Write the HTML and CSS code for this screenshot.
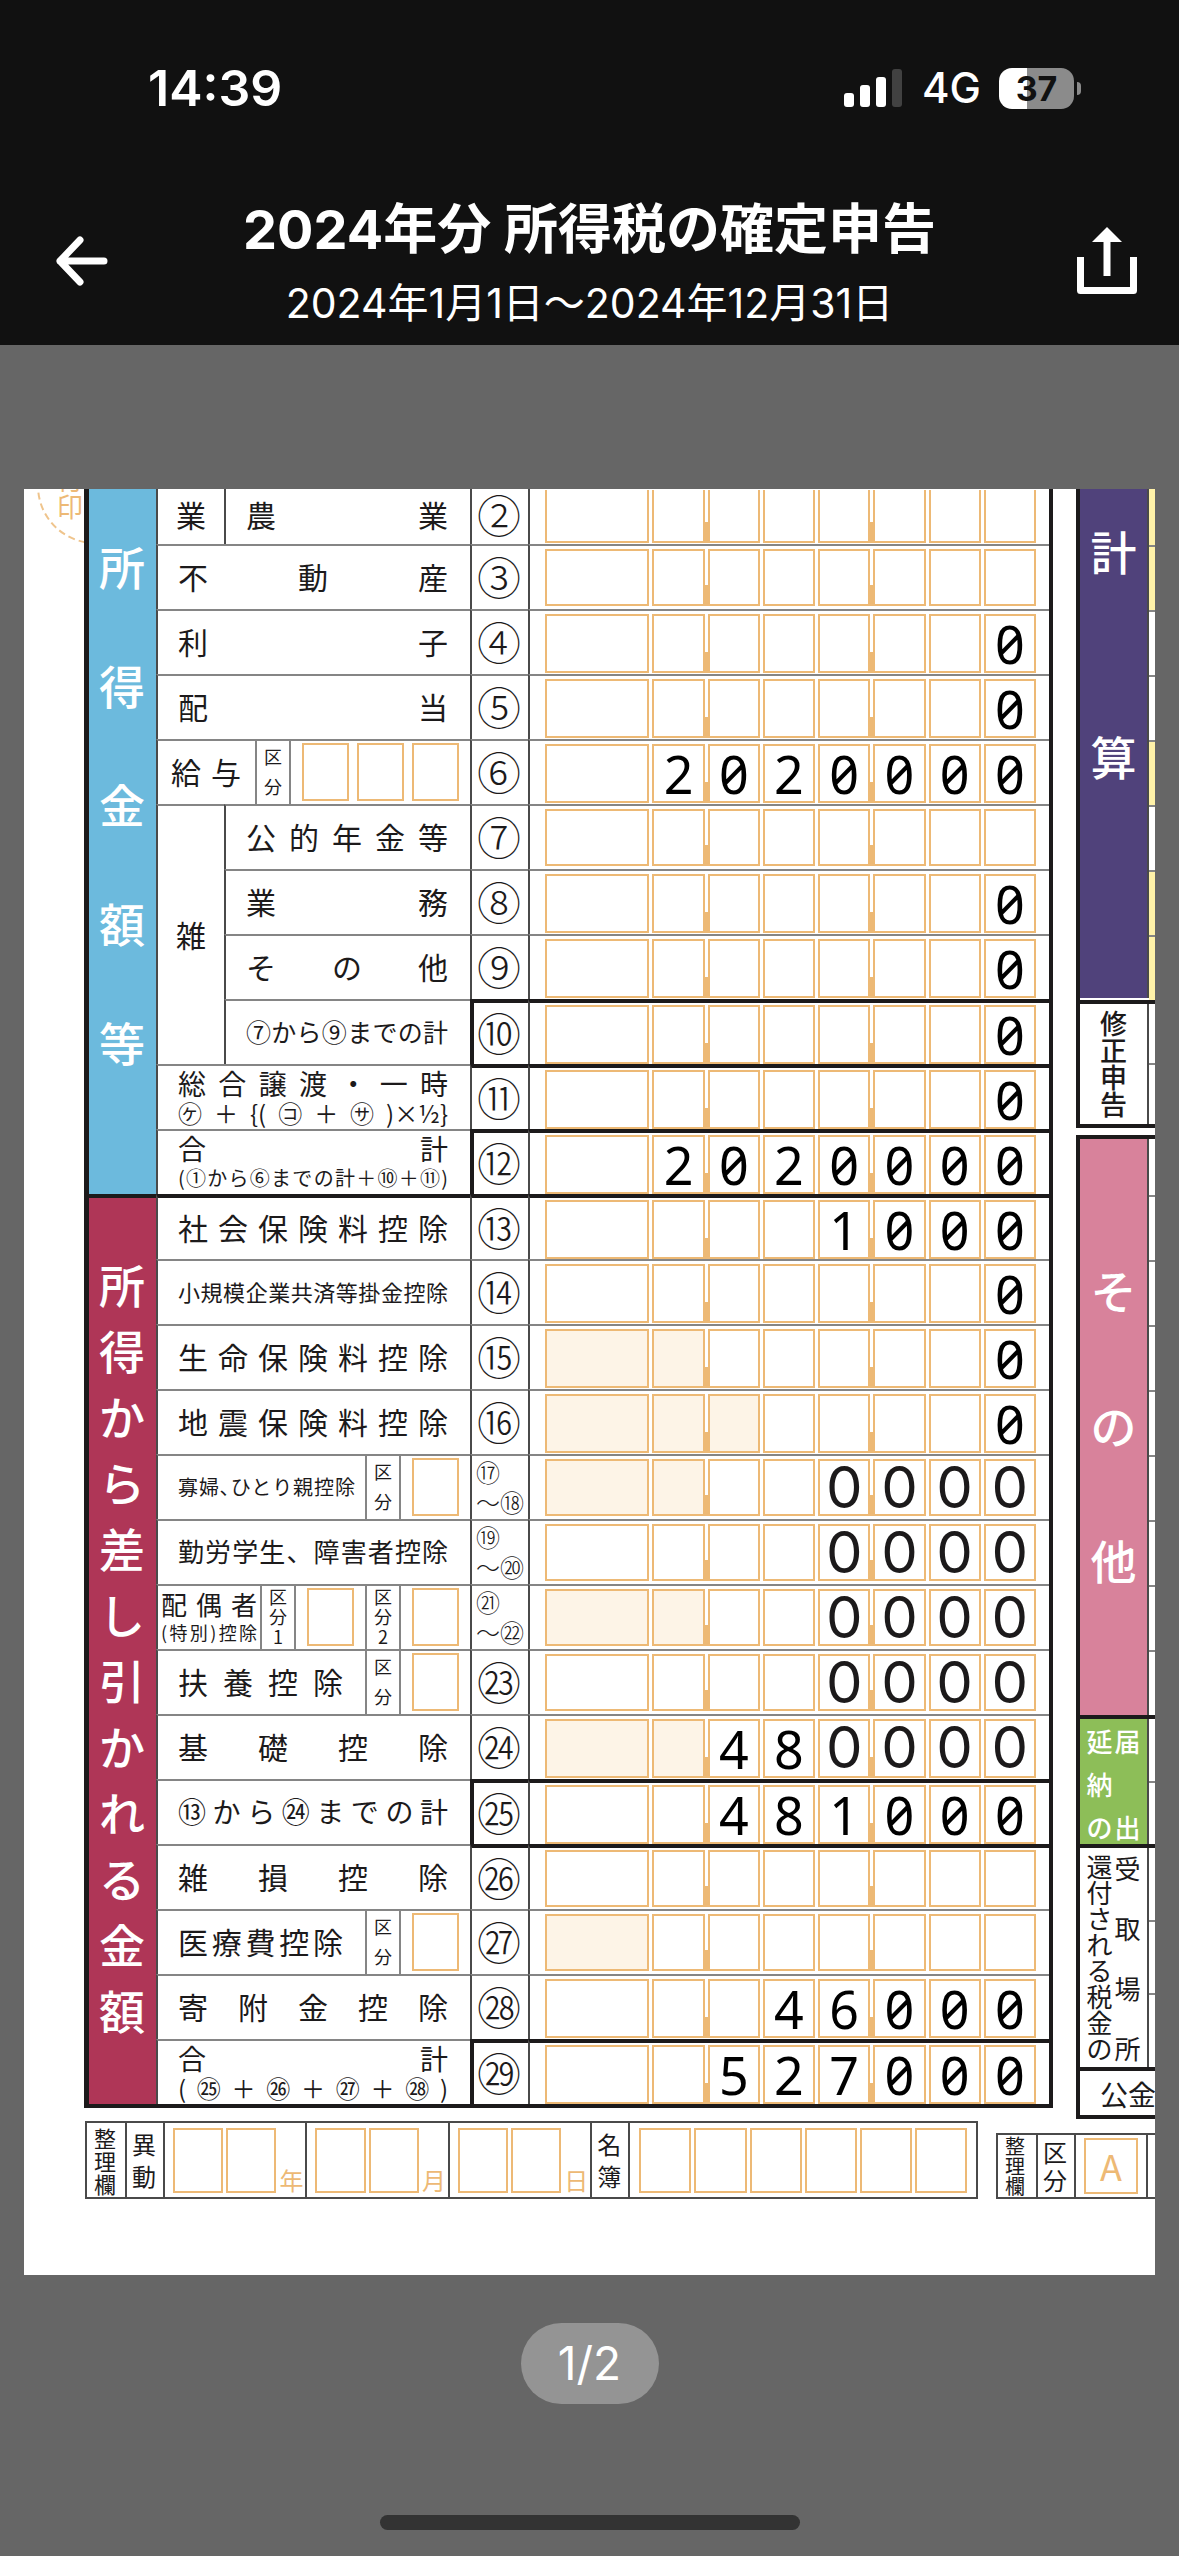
FILE: index.html
```html
<!DOCTYPE html>
<html lang="ja">
<head>
  <meta charset="UTF-8">
  <meta name="viewport" content="width=device-width, initial-scale=1.0">
  <title>2024年分 所得税の確定申告</title>
  <link rel="stylesheet" href="styles.css">
</head>
<body>
  <header class="top">
    <div class="status">
      <span class="clock">14:39</span>
      <div class="status-right">
        <svg class="signal" viewBox="0 0 58 38" aria-hidden="true">
          <rect x="0" y="24" width="10" height="14" rx="3" fill="#fff"/>
          <rect x="16" y="16" width="10" height="22" rx="3" fill="#fff"/>
          <rect x="32" y="8" width="10" height="30" rx="3" fill="#fff"/>
          <rect x="48" y="0" width="10" height="38" rx="3" fill="#414141"/>
        </svg>
        <span class="network">4G</span>
        <div class="battery"><span>37</span></div>
      </div>
    </div>
    <div class="nav">
      <button class="icon-btn" aria-label="戻る">
        <svg width="52" height="50" viewBox="0 0 52 50" fill="none" stroke="#fff" stroke-width="7" stroke-linecap="round" stroke-linejoin="round">
          <path d="M24 4L4 25l20 21M4 25h44"/>
        </svg>
      </button>
      <div class="titles">
        <h1>2024年分 所得税の確定申告</h1>
        <p>2024年1月1日～2024年12月31日</p>
      </div>
      <button class="icon-btn share" aria-label="共有">
        <svg width="60" height="68" viewBox="0 0 60 68">
          <path d="M3.500 30V63.500h53V30" fill="none" stroke="#fff" stroke-width="7" stroke-linejoin="round"/>
          <path d="M30 49V12" stroke="#fff" stroke-width="7"/>
          <path d="M30 0l15 15H15z" fill="#fff"/>
        </svg>
      </button>
    </div>
  </header>

  <main class="viewer">
    <div class="sheet">
      <div class="upper">
        <svg class="stamp" viewBox="0 0 60 70">
          <circle cx="71" cy="-3" r="57" fill="none" stroke="#efc48c" stroke-width="2" stroke-dasharray="7 4"/>
          <text x="46" y="1" text-anchor="middle">付</text>
          <text x="46" y="28" text-anchor="middle">印</text>
        </svg>

        <table class="form">
          <colgroup>
            <col class="c-band"><col class="c-sub"><col class="c-label"><col class="c-num"><col>
          </colgroup>
          <tbody>
            <tr class="first">
              <th class="band blue" rowspan="11">所得金額等</th>
              <th class="sub">業</th>
              <th class="label"><span class="t30">農業</span></th>
              <td class="num">②</td><td class="amount"></td>
            </tr>
            <tr>
              <th class="label" colspan="2"><span class="t30">不動産</span></th>
              <td class="num">③</td><td class="amount"></td>
            </tr>
            <tr>
              <th class="label" colspan="2"><span class="t30">利子</span></th>
              <td class="num">④</td><td class="amount" data-value="0"></td>
            </tr>
            <tr>
              <th class="label" colspan="2"><span class="t30">配当</span></th>
              <td class="num">⑤</td><td class="amount" data-value="0"></td>
            </tr>
            <tr>
              <th class="label split-cell" colspan="2">
                <div class="split">
                  <span class="name short t30">給与</span>
                  <span class="kubun">区分</span>
                  <span class="slots"><i></i><i></i><i></i></span>
                </div>
              </th>
              <td class="num">⑥</td><td class="amount" data-value="2020000"></td>
            </tr>
            <tr>
              <th class="sub" rowspan="4">雑</th>
              <th class="label"><span class="t30">公的年金等</span></th>
              <td class="num">⑦</td><td class="amount"></td>
            </tr>
            <tr>
              <th class="label"><span class="t30">業務</span></th>
              <td class="num">⑧</td><td class="amount" data-value="0"></td>
            </tr>
            <tr>
              <th class="label"><span class="t30">その他</span></th>
              <td class="num">⑨</td><td class="amount" data-value="0"></td>
            </tr>
            <tr class="total">
              <th class="label"><span class="t25">⑦から⑨までの計</span></th>
              <td class="num">⑩</td><td class="amount" data-value="0"></td>
            </tr>
            <tr class="after-total">
              <th class="label two" colspan="2"><span class="t28">総合譲渡・一時</span><span class="t24">㋘＋{(㋙＋㋚)×½}</span></th>
              <td class="num">⑪</td><td class="amount" data-value="0"></td>
            </tr>
            <tr class="total">
              <th class="label two" colspan="2"><span class="t28">合計</span><span class="t20">(①から⑥までの計＋⑩＋⑪)</span></th>
              <td class="num">⑫</td><td class="amount" data-value="2020000"></td>
            </tr>
            <tr class="section">
              <th class="band red" rowspan="14">所得から差し引かれる金額</th>
              <th class="label" colspan="2"><span class="t30">社会保険料控除</span></th>
              <td class="num">⑬</td><td class="amount" data-value="1000"></td>
            </tr>
            <tr>
              <th class="label" colspan="2"><span class="t22">小規模企業共済等掛金控除</span></th>
              <td class="num">⑭</td><td class="amount" data-value="0"></td>
            </tr>
            <tr>
              <th class="label" colspan="2"><span class="t30">生命保険料控除</span></th>
              <td class="num">⑮</td><td class="amount" data-value="0" data-shade="2"></td>
            </tr>
            <tr>
              <th class="label" colspan="2"><span class="t30">地震保険料控除</span></th>
              <td class="num">⑯</td><td class="amount" data-value="0" data-shade="3"></td>
            </tr>
            <tr>
              <th class="label split-cell" colspan="2">
                <div class="split">
                  <span class="name t20">寡婦､ひとり親控除</span>
                  <span class="kubun">区分</span>
                  <span class="slots"><i></i></span>
                </div>
              </th>
              <td class="num range"><span>⑰</span><span>～⑱</span></td><td class="amount" data-printed="0000" data-shade="2"></td>
            </tr>
            <tr>
              <th class="label" colspan="2"><span class="t26">勤労学生、障害者控除</span></th>
              <td class="num range"><span>⑲</span><span>～⑳</span></td><td class="amount" data-printed="0000"></td>
            </tr>
            <tr>
              <th class="label split-cell" colspan="2">
                <div class="split">
                  <span class="name tight"><span class="t26">配偶者</span><span class="t18">(特別)控除</span></span>
                  <span class="kubun numbered">区分1</span>
                  <span class="slots"><i></i></span>
                  <span class="kubun numbered">区分2</span>
                  <span class="slots"><i></i></span>
                </div>
              </th>
              <td class="num range"><span>㉑</span><span>～㉒</span></td><td class="amount" data-printed="0000" data-shade="2"></td>
            </tr>
            <tr>
              <th class="label split-cell" colspan="2">
                <div class="split">
                  <span class="name wide t30">扶養控除</span>
                  <span class="kubun">区分</span>
                  <span class="slots"><i></i></span>
                </div>
              </th>
              <td class="num">㉓</td><td class="amount" data-printed="0000"></td>
            </tr>
            <tr>
              <th class="label" colspan="2"><span class="t30">基礎控除</span></th>
              <td class="num">㉔</td><td class="amount" data-value="48" data-printed="0000" data-shade="2"></td>
            </tr>
            <tr class="total">
              <th class="label" colspan="2"><span class="t28">⑬から㉔までの計</span></th>
              <td class="num">㉕</td><td class="amount" data-value="481000"></td>
            </tr>
            <tr class="after-total">
              <th class="label" colspan="2"><span class="t30">雑損控除</span></th>
              <td class="num">㉖</td><td class="amount"></td>
            </tr>
            <tr>
              <th class="label split-cell" colspan="2">
                <div class="split">
                  <span class="name wide t30">医療費控除</span>
                  <span class="kubun">区分</span>
                  <span class="slots"><i></i></span>
                </div>
              </th>
              <td class="num">㉗</td><td class="amount" data-shade="1"></td>
            </tr>
            <tr>
              <th class="label" colspan="2"><span class="t30">寄附金控除</span></th>
              <td class="num">㉘</td><td class="amount" data-value="46000"></td>
            </tr>
            <tr class="total">
              <th class="label two" colspan="2"><span class="t28">合計</span><span class="t24">(㉕＋㉖＋㉗＋㉘)</span></th>
              <td class="num">㉙</td><td class="amount" data-value="527000"></td>
            </tr>
          </tbody>
        </table>

        <div class="side">
          <div class="side-box">
            <div class="side-row">
              <div class="side-band purple"><span>計</span><span>算</span></div>
              <div class="edge"><b class="first yellow"></b><b class="yellow"></b><b></b><b></b><b class="yellow"></b><b></b><b class="yellow"></b><b class="yellow"></b></div>
            </div>
            <div class="side-row">
              <div class="side-band plain">修正申告</div>
              <div class="edge even"><b></b><b></b></div>
            </div>
          </div>
          <div class="side-box lower">
            <div class="side-row">
              <div class="side-band pink">その他</div>
              <div class="edge"><b class="first"></b><b></b><b></b><b></b><b></b><b></b><b></b><b></b><b></b></div>
            </div>
            <div class="side-row">
              <div class="side-band green"><span>延納の</span><span class="right">届出</span></div>
              <div class="edge even"><b></b><b></b></div>
            </div>
            <div class="side-row">
              <div class="side-band refund"><span>還付される税金の</span><span class="right">受取場所</span></div>
              <div class="edge even"><b></b><b></b><b></b></div>
            </div>
            <div class="side-row public">公金</div>
          </div>
        </div>
      </div>

      <div class="office">
        <div class="office-box main">
          <span class="tag three">整理欄</span>
          <span class="tag">異動</span>
          <span class="date"><i></i><i></i><em>年</em></span>
          <span class="date"><i></i><i></i><em>月</em></span>
          <span class="date"><i></i><i></i><em>日</em></span>
          <span class="tag">名簿</span>
          <span class="book"><i></i><i></i><i></i><i></i><i></i><i></i></span>
        </div>
        <div class="office-box second">
          <span class="tag three">整理欄</span>
          <span class="tag">区分</span>
          <span class="letter"><i>A</i></span>
          <span class="letter"><i></i></span>
        </div>
      </div>
    </div>

    <div class="pager">1/2</div>
    <div class="home-bar"></div>
  </main>

  <script>
    // one wide box followed by seven single-digit boxes
    const BOXES = 8;

    document.querySelectorAll(".amount").forEach((cell) => {
      const printed = cell.dataset.printed || "";
      const value = (cell.dataset.value || "") + printed;
      const shade = Number(cell.dataset.shade || 0);
      const wrap = document.createElement("div");
      wrap.className = "boxes";

      for (let i = 0; i < BOXES; i++) {
        const box = document.createElement("span");
        const pos = i - (BOXES - value.length);
        box.className = "box";
        if (i < shade) box.classList.add("shaded");
        if (i === 1 || i === 4) box.classList.add("comma");
        if (pos >= 0) {
          box.textContent = value[pos];
          if (i >= BOXES - printed.length) box.classList.add("printed");
        }
        wrap.appendChild(box);
      }
      cell.appendChild(wrap);
    });
  </script>
</body>
</html>
```
FILE: styles.css
```css
* { box-sizing: border-box; }
body {
  margin: 0; background: #666; color: #1c1a1b;
  font-family: "Noto Sans CJK JP", sans-serif;
}
i, em { font-style: normal; }

/* header */
.top { background: #111; color: #fff; height: 345px; font-family: Inter, "Noto Sans CJK JP", sans-serif; }
.status { display: flex; justify-content: space-between; align-items: center; padding: 62px 105px 0 148px; }
.clock { font-size: 50px; line-height: 52px; font-weight: 600; }
.status-right { display: flex; align-items: center; }
.signal { width: 58px; height: 38px; margin-right: 20px; }
.network { font-size: 42px; line-height: 52px; font-weight: 500; margin-right: 18px; }
.battery {
  position: relative; width: 75px; height: 41px; border-radius: 13px; text-align: center;
  background: linear-gradient(to right, #fff 37%, #8b8b8b 37%);
  color: #111; font-size: 34px; line-height: 41px; font-weight: 700;
}
.battery::after {
  content: ""; position: absolute; right: -7px; top: 14px; width: 4px; height: 13px;
  border-radius: 0 4px 4px 0; background: #8b8b8b;
}
.nav { display: grid; grid-template-columns: 92px 1fr 92px; padding: 78px 36px 0; }
.icon-btn { height: 76px; margin-top: 31px; padding: 0; border: 0; background: none; display: flex; align-items: center; justify-content: center; }
.share { width: 72px; justify-self: end; }
.titles { text-align: center; white-space: nowrap; }
.titles h1 { margin: 0; font-size: 54px; line-height: 76px; font-weight: 700; }
.titles p { margin: 0; font-size: 41px; line-height: 70px; }

/* page */
.viewer { display: flex; flex-direction: column; align-items: center; padding: 144px 24px 24px; }
.sheet { width: 100%; background: #fff; overflow: hidden; padding-bottom: 76px; }
.upper { display: flex; align-items: flex-start; }
.stamp { width: 60px; height: 70px; flex: none; fill: #edb975; font-size: 26px; }

/* main form */
.form { flex: 1; width: 0; table-layout: fixed; border-spacing: 0; border: solid #1c1a1b; border-width: 0 4px 4px 5px; }
.c-band { width: 67px; }
.c-sub { width: 68px; }
.c-label { width: 246px; }
.c-num { width: 58px; }
.form tr { height: 65px; }
.form tr.first { height: 55px; }
.form th, .form td { padding: 0; font-weight: 400; border-top: 2px solid #858585; }
.form .first > * { border-top: 0; }
.form .label, .form .sub, .form .num, .form .amount { border-left: 2px solid #4a4a4a; }
.form .band {
  vertical-align: top; color: #fff; border-top: 0; padding-left: 9px; padding-right: 10px;
  font-size: 46px; font-weight: 500; word-break: break-all;
}
.form .blue { background: #6cbadd; padding-top: 17px; line-height: 119px; }
.form .red { background: #af3657; padding-top: 52px; line-height: 66px; }
.form .sub { font-size: 30px; line-height: 40px; padding-bottom: 3px; }
.form .label { padding: 0 22px 3px 20px; }
.form .label > span { display: block; text-align: justify; text-align-last: justify; white-space: nowrap; line-height: 40px; }
.form .two { padding-bottom: 1px; }
.form .two > span { line-height: 30px; }
.form .two > span + span { line-height: 29px; }
.form .split-cell { padding: 0; }
.form .first .num, .form .first .label, .form .first .sub { vertical-align: top; line-height: 50px; }
.form .first .label > span { line-height: 50px; }
.t18 { font-size: 18px; }
.t20 { font-size: 20px; }
.t22 { font-size: 22px; }
.t24 { font-size: 24px; }
.t25 { font-size: 25px; }
.t26 { font-size: 26px; }
.t28 { font-size: 28px; }
.t30 { font-size: 30px; }

.form .total .num, .form .total .amount,
.form .after-total .num, .form .after-total .amount,
.form .section > * { border-top: 4px solid #1c1a1b; }
.form .total .num { border-left: 4px solid #1c1a1b; }

.form .num { font-size: 44px; line-height: 50px; font-weight: 300; text-align: center; padding: 0 2px 3px 0; }
.form .total .num { padding-right: 4px; }
.form .range { padding: 0 4px 1px; }
.range span { display: block; font-size: 24px; line-height: 30px; text-align: left; }
.range span + span { text-align: right; }

.split { display: flex; height: 63px; }
.name { flex: 1; align-self: center; padding: 0 10px 3px 20px; text-align-last: justify; white-space: nowrap; }
.name.short { padding: 0 14px 3px 13px; }
.name.wide { padding-right: 22px; }
.name.tight { padding: 0 3px; line-height: 29px; }
.name.tight span { display: block; }
.kubun {
  width: 36px; padding: 0 7px; border: solid #858585; border-width: 0 2px;
  font-size: 18px; line-height: 30px; word-break: break-all;
}
.kubun.numbered { line-height: 20px; text-align: center; }
.slots { display: flex; gap: 8px; padding: 2px 11px 3px; }
.slots i { width: 47px; border: 2px solid #edb975; }

.boxes { display: grid; grid-template-columns: 2fr repeat(7, 1fr); gap: 3px; height: 57px; padding: 0 13px 0 15px; }
.first .boxes { height: 53px; }
.first .box { border-top: 0; }
.box {
  position: relative; border: 2px solid #edb975; text-align: center; color: #000;
  font-family: "Noto Sans", sans-serif; font-size: 52px; line-height: 55px;
  font-variant-numeric: slashed-zero;
}
.box.shaded { background: #fdf4e7; }
.box.printed { font-family: Inter, sans-serif; font-size: 58px; line-height: 53px; font-variant-numeric: normal; color: #1c1a1b; }
.box.comma::after {
  content: ""; position: absolute; right: -5px; bottom: -2px; width: 5px; height: 21px; background: #edb975;
}

/* right-hand strip, cut off by the edge of the view */
.side { width: 79px; margin-left: 23px; flex: none; }
.side-box { border: solid #1c1a1b; border-width: 0 0 4px 4px; }
.side-box.lower { border-top-width: 4px; margin-top: 7px; }
.side-row { display: flex; }
.side-row + .side-row { border-top: 4px solid #1c1a1b; }
.side-band { width: 69px; border-right: 2px solid #4a4a4a; color: #fff; text-align: center; word-break: break-all; }
.purple { background: #50427b; display: flex; flex-direction: column; align-items: center; gap: 159px; padding-top: 38px; font-size: 46px; line-height: 46px; font-weight: 500; height: 509px; }
.plain { color: #1c1a1b; font-size: 27px; line-height: 27px; font-weight: 500; padding: 5px 19px; height: 120px; }
.pink { background: #d8829b; font-size: 46px; line-height: 135px; font-weight: 500; padding: 83px 10px 0; height: 576px; }
.green, .refund { display: flex; justify-content: center; gap: 2px; font-size: 26px; padding: 0 6px; }
.green span, .refund span { width: 26px; }
.green { background: #8dbe58; height: 125px; line-height: 43px; font-weight: 500; padding-top: 0; }
.green .right { line-height: 86px; margin-top: -21px; }
.refund { color: #1c1a1b; height: 219px; line-height: 26px; padding-top: 5px; }
.refund .right { line-height: 60px; margin-top: -15px; }
.public { height: 48px; padding-left: 20px; font-size: 28px; line-height: 46px; white-space: nowrap; }
.edge { flex: 1; display: flex; flex-direction: column; overflow: hidden; }
.edge b { flex: 0 1 65px; border-top: 2px solid #858585; }
.edge b:first-child { border-top: 0; }
.edge b.first { flex-basis: 56px; }
.edge.even b { flex: 1; }
.yellow { background: #fff2a8; }

/* office-use strips below the form */
.office { display: flex; align-items: flex-end; margin: 2px 0 0 61px; }
.office-box { border: 2px solid #4a4a4a; }
.office-box > span + span { border-left: 2px solid #4a4a4a; }
.office-box i { border: 2px solid #edb975; color: #edb975; }
.main { display: grid; grid-template-columns: 38px 38px repeat(3, 143fr) 38px 349fr; flex: 1; height: 78px; }
.second { display: flex; width: 159px; height: 66px; margin-left: 18px; border-right: 0; flex: none; }
.tag { width: 38px; padding: 0 5px; font-size: 24px; line-height: 32px; flex: none; word-break: break-all; display: flex; align-items: center; }
.second .tag { line-height: 28px; }
.tag.three { padding: 0 7px; line-height: 23px; font-size: 22px; }
.second .tag.three { line-height: 20px; font-size: 20px; }
.date { display: flex; gap: 3px; padding: 5px 2px 4px 8px; }
.date i { flex: 1; }
.date em { width: 24px; align-self: flex-end; font-size: 24px; line-height: 26px; color: #edb975; }
.book { display: flex; gap: 3px; padding: 5px 9px 4px; }
.book i { flex: 1; }
.letter { flex: none; width: 72px; padding: 3px 8px; display: flex; }
.letter i { flex: 1; font-size: 36px; line-height: 50px; text-align: center; }

.pager { margin-top: 48px; width: 138px; height: 81px; border-radius: 41px; background: #949494; color: #fff; font: 46px/81px Inter, sans-serif; text-align: center; }
.home-bar { margin-top: 111px; width: 420px; height: 15px; border-radius: 8px; background: #333; }
```
